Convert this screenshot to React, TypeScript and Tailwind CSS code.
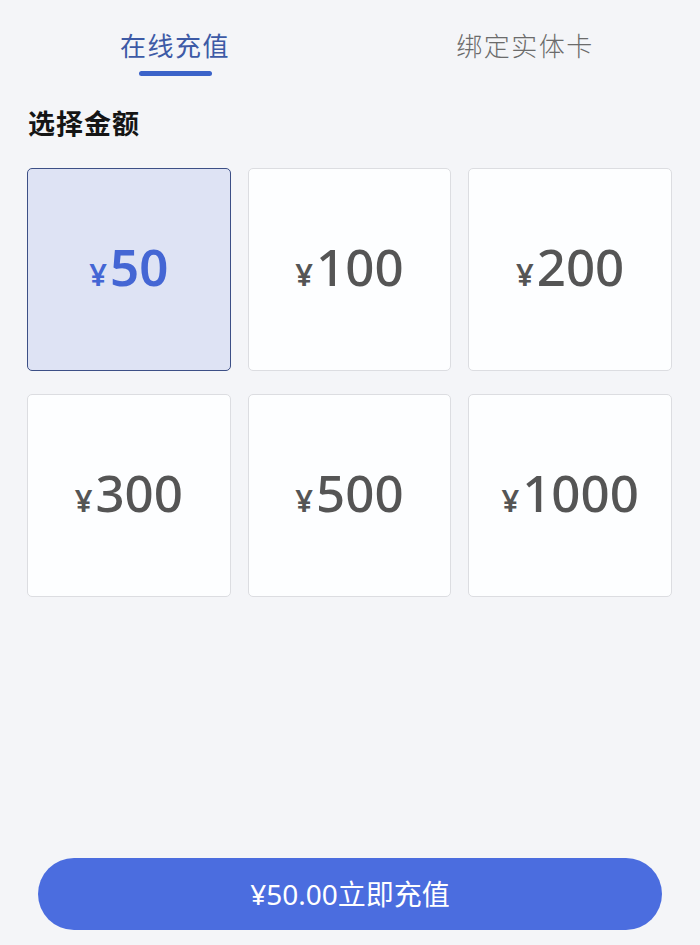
import React from "react";

const amounts = ["50", "100", "200", "300", "500", "1000"];

export default function App() {
  const selected = 0;
  return (
    <div
      className="flex h-[945px] w-[700px] flex-col bg-[#f4f5f8]"
      style={{ fontFamily: '"Noto Sans", "Noto Sans CJK SC", sans-serif' }}
    >
      {/* Tabs */}
      <div className="grid grid-cols-2 pt-[27px]">
        <div className="flex flex-col items-center">
          <div className="text-[26px] leading-[38px] tracking-[1.5px] font-normal text-[#3d5aa6]">
            在线充值
          </div>
          <div className="mt-[6px] h-[5px] w-[73px] rounded-full bg-[#3b63c9]" />
        </div>
        <div className="flex flex-col items-center">
          <div className="text-[26px] leading-[38px] tracking-[1.5px] font-light text-[#6b6b6b]">
            绑定实体卡
          </div>
        </div>
      </div>

      {/* Heading */}
      <div className="mt-[29px] pl-[28px] text-[27px] leading-[38px] tracking-[1px] font-bold text-[#151515]">
        选择金额
      </div>

      {/* Grid */}
      <div className="mt-[25px] grid grid-cols-3 gap-x-[17px] gap-y-[23px] pl-[27px] pr-[28px]">
        {amounts.map((a, i) => {
          const active = i === selected;
          return (
            <div
              key={a}
              className={
                active
                  ? "flex h-[203px] items-center justify-center rounded-[5px] border border-[#3c4f86] bg-[#dee3f4]"
                  : "flex h-[203px] items-center justify-center rounded-[5px] border border-[#dcdde1] bg-[#fdfeff]"
              }
            >
              <div
                className={
                  active
                    ? "flex items-baseline text-[#4466d4]"
                    : "flex items-baseline text-[#555555]"
                }
              >
                <span className="mr-[3px] text-[31px] font-semibold">¥</span>
                <span
                  className={
                    active
                      ? "text-[51px] leading-none font-semibold"
                      : "text-[51px] leading-none font-medium"
                  }
                >
                  {a}
                </span>
              </div>
            </div>
          );
        })}
      </div>

      {/* Button */}
      <div className="mt-auto px-[38px] pb-[15px]">
        <button className="flex h-[72px] w-full items-center justify-center rounded-full bg-[#4b6ddf] text-[28px] text-white">
          ¥50.00立即充值
        </button>
      </div>
    </div>
  );
}
